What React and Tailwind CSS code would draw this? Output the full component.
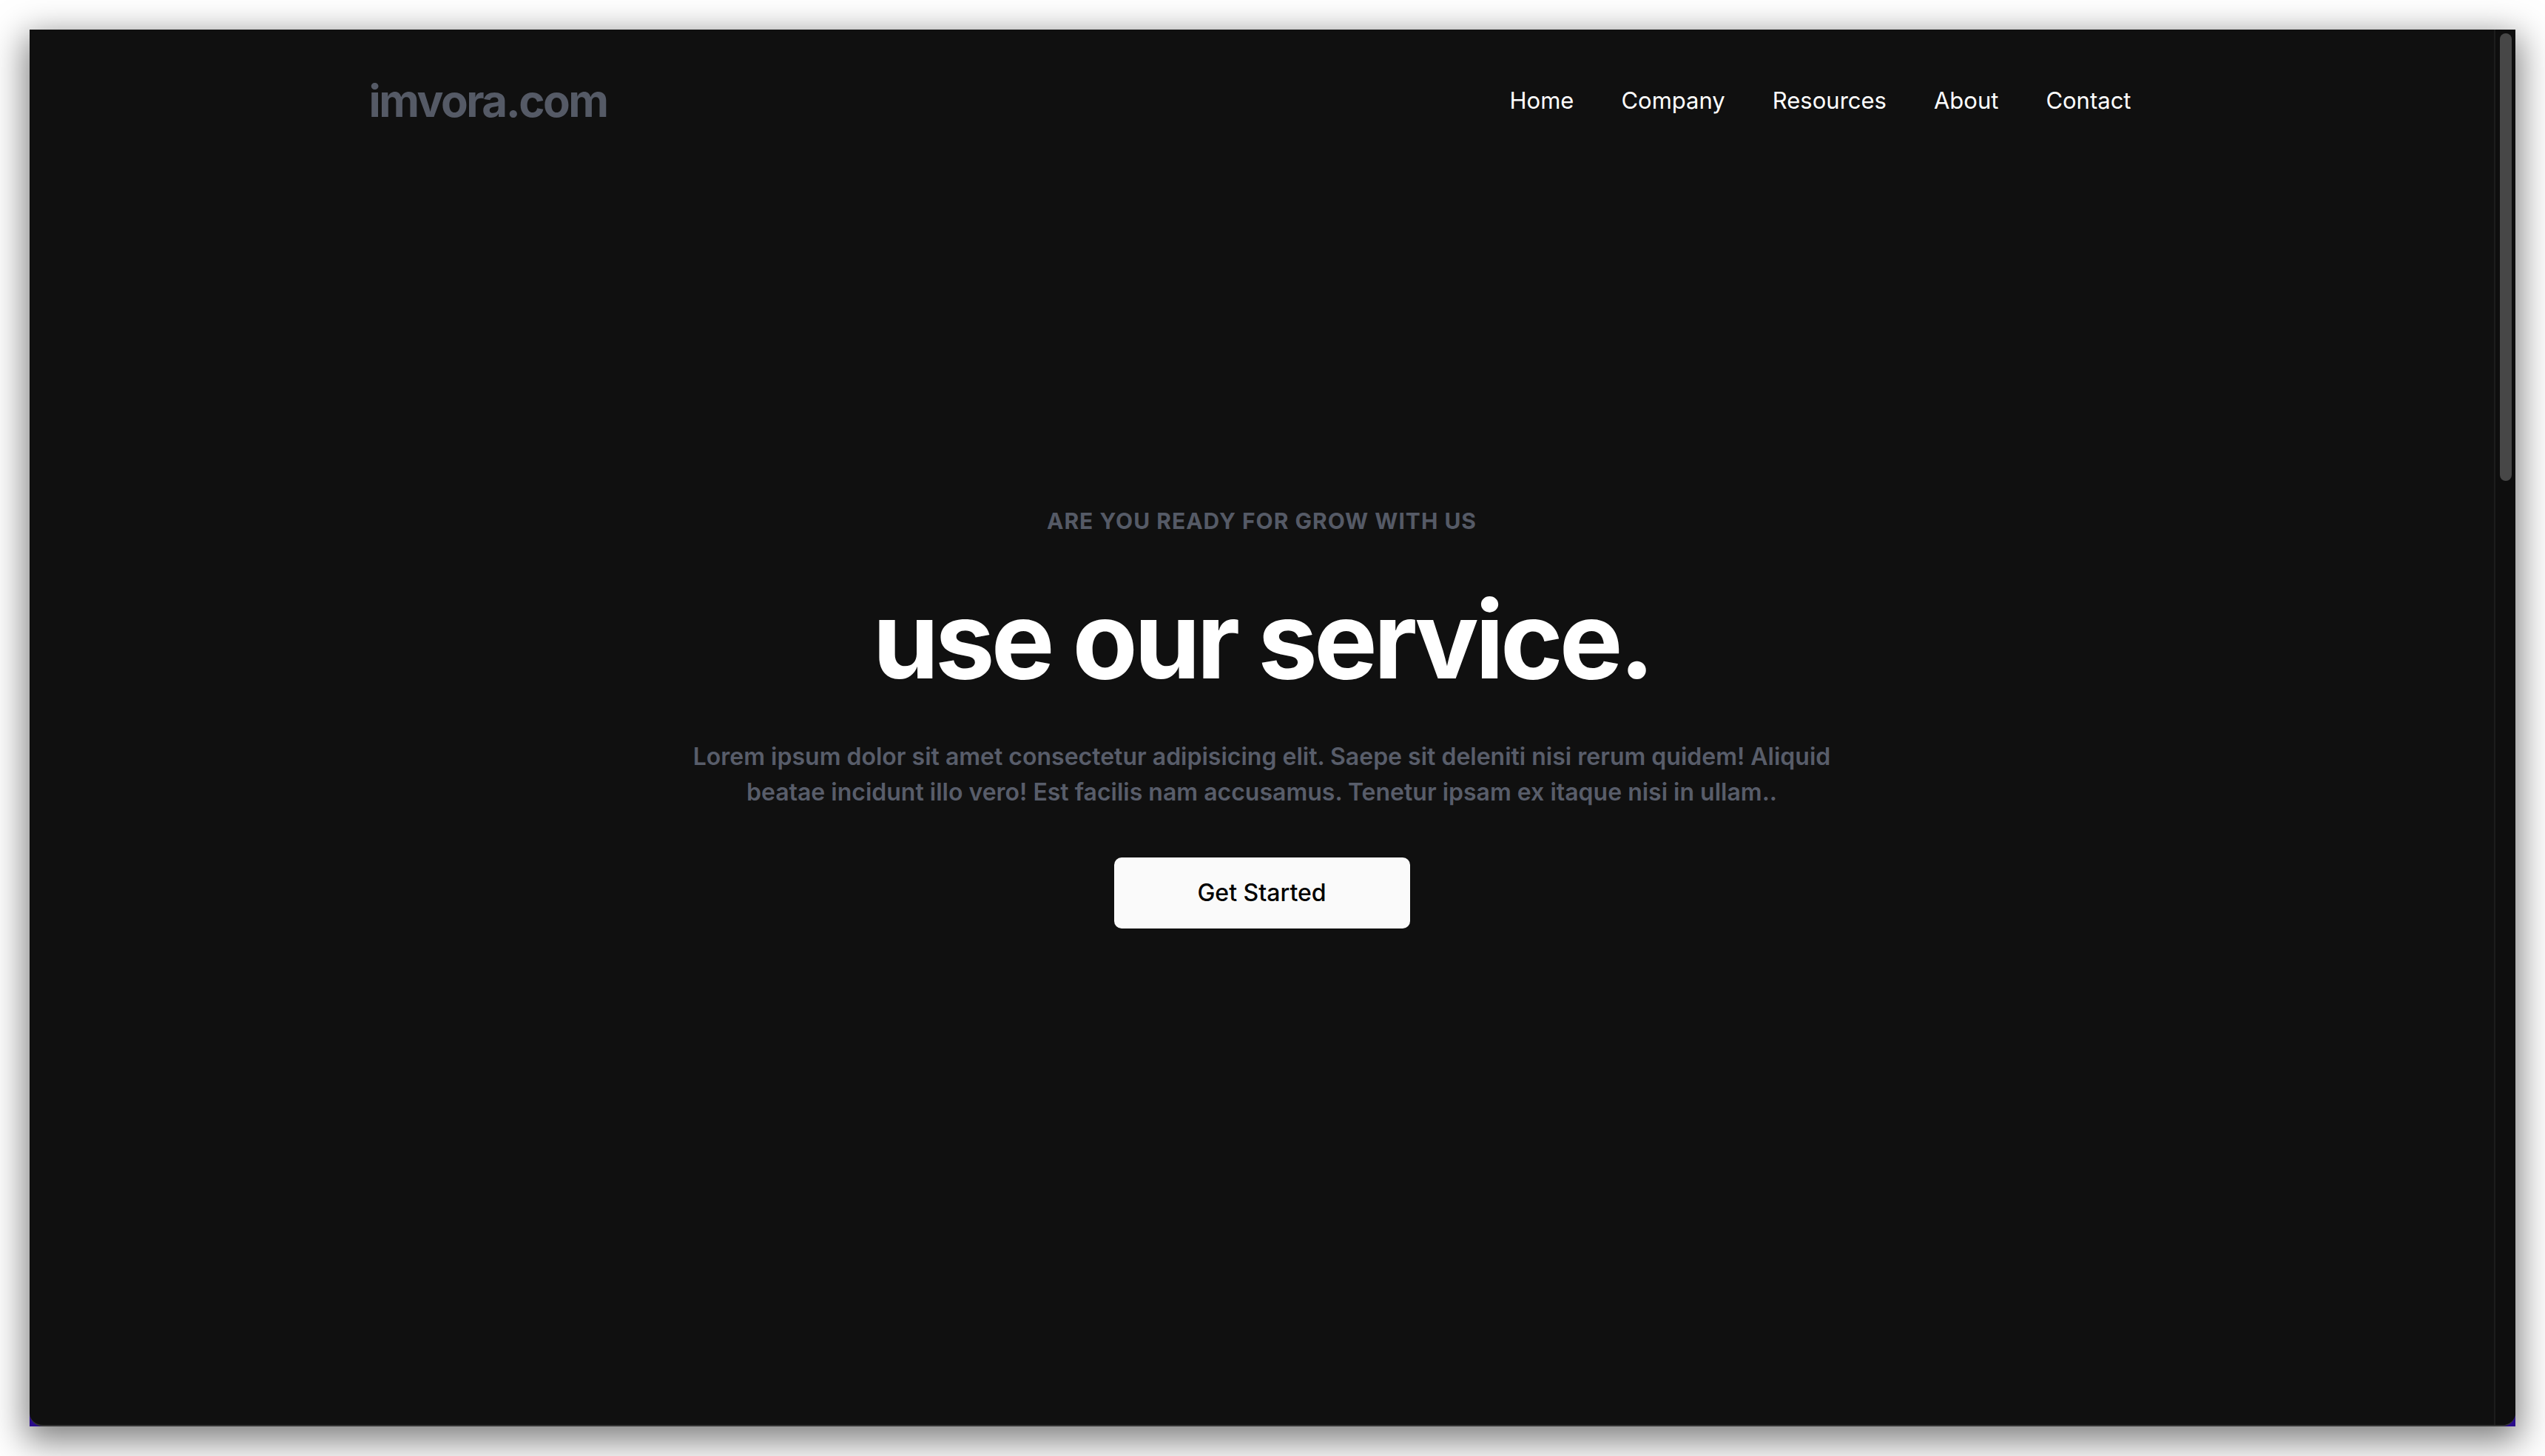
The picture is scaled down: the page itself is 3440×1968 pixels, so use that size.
export default function App() {
  const links = ["Home", "Company", "Resources", "About", "Contact"];

  return (
    <div
      className="w-[3440px] h-[1968px] bg-white p-[40px] overflow-hidden"
      style={{ fontFamily: "Inter, 'Noto Sans', sans-serif" }}
    >
      {/* Window frame */}
      <div className="w-full h-full bg-[#2a0c8c] shadow-[0_14px_44px_6px_rgba(0,0,0,0.5)]">
        <div className="w-full h-full flex bg-[#101010] rounded-b-[18px] border-b-2 border-[#343434] overflow-hidden">
          {/* Page */}
          <div className="flex-1 flex flex-col">
            {/* Header */}
            <header className="h-[192px] flex items-center">
              <div className="w-[2414px] mx-auto flex items-center justify-between">
                <a className="text-[60px] leading-[72px] font-bold text-[#555a66] tracking-[-2.5px]">
                  imvora.com
                </a>
                <nav className="flex items-center">
                  {links.map((link) => (
                    <a
                      key={link}
                      className="px-[32px] text-[31px] leading-[48px] text-white"
                    >
                      {link}
                    </a>
                  ))}
                </nav>
              </div>
            </header>

            {/* Hero */}
            <section className="flex flex-col items-center text-center pt-[452px]">
              <p className="text-[30px] leading-[40px] font-bold uppercase tracking-[1px] text-[#555a66]">
                Are you ready for grow with us
              </p>
              <h1 className="mt-[69px] text-[144px] leading-[144px] font-bold text-white tracking-[-5px]">
                use our service.
              </h1>
              <p className="mt-[62px] max-w-[1600px] text-[32px] leading-[48px] font-semibold text-[#585d6a]">
                Lorem ipsum dolor sit amet consectetur adipisicing elit. Saepe sit deleniti
                nisi rerum quidem! Aliquid beatae incidunt illo vero! Est facilis nam
                accusamus. Tenetur ipsam ex itaque nisi in ullam..
              </p>
              <button className="mt-[64px] w-[400px] h-[96px] rounded-[10px] bg-[#fafafa] text-[32px] leading-[48px] font-medium text-black">
                Get Started
              </button>
            </section>
          </div>

          {/* Scrollbar */}
          <div className="w-[29px] border-l-2 border-[#1c1c1c] bg-[#0e0e0e] flex justify-center pt-[5px]">
            <div className="w-[16px] h-[605px] rounded-full bg-[#474747]"></div>
          </div>
        </div>
      </div>
    </div>
  );
}
